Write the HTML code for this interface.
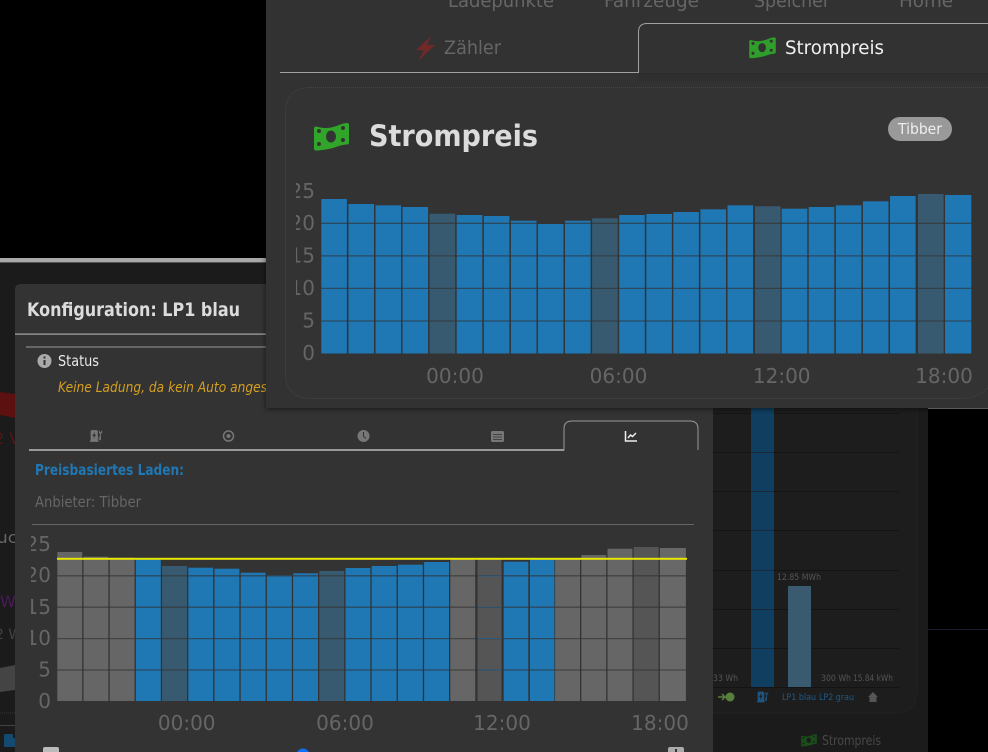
<!DOCTYPE html>
<html lang="de"><head><meta charset="utf-8"><title>Strompreis</title>
<style>
html,body{margin:0;padding:0;background:#000;width:988px;height:752px;overflow:hidden}
svg{display:block}
text{font-family:"DejaVu Sans","Liberation Sans",sans-serif}
.ax{font-size:20px;fill:#666}
</style></head><body>
<svg width="988" height="752" viewBox="0 0 988 752" xmlns="http://www.w3.org/2000/svg">
<defs>
<symbol id="money" viewBox="0 0 35 29">
<path fill-rule="evenodd" d="M2 4C8 5.500 12 6 17 5C23 4 28 .5 33 .5Q35 .5 35 2.500V20Q35 22 33 22C27 22 22 25 17 26C12 27 6 28 2 28Q0 28 0 26V6Q0 4 2 4ZM17 8A5 6 0 1 0 17 20A5 6 0 1 0 17 8ZM5 6.500A2 2 0 1 0 5 10.500A2 2 0 1 0 5 6.500ZM29 3.500A2 2 0 1 0 29 7.500A2 2 0 1 0 29 3.500ZM5 19.500A2 2 0 1 0 5 23.500A2 2 0 1 0 5 19.500ZM29 15.500A2 2 0 1 0 29 19.500A2 2 0 1 0 29 15.500Z"/>
</symbol>
<symbol id="plug" viewBox="0 0 20 20">
<path fill-rule="evenodd" d="M1 3Q1 1 3 1H10Q12 1 12 3V17H13V19H0V17H1ZM7.500 3.500L3.500 10H6L5 15L9.500 8H7Z"/>
<path d="M14 11V15Q14 16 15 16Q16 16 16 15V5M14.500 2V5H18V2M16 5V10" fill="none" stroke="currentColor" stroke-width="1.500"/>
</symbol>
<clipPath id="cTop"><rect x="296" y="170" width="690" height="225"/></clipPath>
<clipPath id="cBot"><rect x="31" y="530" width="680" height="222"/></clipPath>
<filter id="sh" x="-5%" y="-5%" width="110%" height="110%"><feDropShadow dx="0" dy="1" stdDeviation="3" flood-color="#000" flood-opacity=".6"/></filter>
<linearGradient id="tg" x1="0" y1="0" x2="0" y2="1"><stop offset="0" stop-color="#2c2c2c"/><stop offset="1" stop-color="#333"/></linearGradient>
</defs>

<!-- background window -->
<rect width="988" height="752" fill="#000"/>
<rect x="0" y="258" width="988" height="4.500" fill="#a8a8a8"/>
<rect x="0" y="263" width="928" height="489" fill="#1b1b1b"/>
<rect x="928" y="408" width="60" height="1" fill="#888"/>
<rect x="928" y="629" width="60" height="1" fill="#1a1a2a"/>
<path d="M0 392L15 394V418L0 415Z" fill="#5c1010"/>
<text x="-6" y="444" font-size="16" fill="#5c1414">2 V</text>
<text x="-3" y="543" font-size="16" fill="#666" textLength="20" lengthAdjust="spacingAndGlyphs">uc</text>
<text x="0" y="607" font-size="16" fill="#4a1a5a">W</text>
<text x="-5" y="639" font-size="14" fill="#444">2 W</text>
<path d="M0 668L15 665V690L0 692Z" fill="#444"/>
<path d="M0 713H15" stroke="#333" stroke-dasharray="1 1"/>
<rect x="0" y="725" width="15" height="1" fill="#444"/>
<rect x="4" y="734" width="9" height="13" fill="#154a70" rx="1"/>
<rect x="12" y="738" width="3" height="9" fill="#154a70"/>

<!-- background card bottom-right -->
<path d="M700 408H917V690Q917 713 894 713H700Z" fill="#1d1d1d" stroke="#282828" stroke-dasharray="1 1"/>
<g stroke="#141414" stroke-width="1"><path d="M713 413.500H899M713 452.500H899M713 491.500H899M713 530.500H899M713 570.500H899M713 609.500H899M713 648.500H899M713 687.500H899"/></g>
<rect x="751" y="408" width="23" height="279" fill="#0f3e60"/>
<rect x="788" y="586" width="23" height="101" fill="#3a5a70"/>
<g stroke="#1a2a3a" stroke-width="1"><path d="M751 452.500H774M751 491.500H774M751 530.500H774M751 570.500H774M751 609.500H774M751 648.500H774"/></g>
<g font-size="9" fill="#555">
<text x="777" y="580" textLength="44" lengthAdjust="spacingAndGlyphs">12.85 MWh</text>
<text x="713" y="681" textLength="25" lengthAdjust="spacingAndGlyphs">33 Wh</text>
<text x="821" y="681" textLength="30" lengthAdjust="spacingAndGlyphs">300 Wh</text>
<text x="853" y="681" textLength="40" lengthAdjust="spacingAndGlyphs">15.84 kWh</text>
</g>
<path d="M718 697H725M722 694L725 697L722 700" stroke="#56803c" stroke-width="1.500" fill="none"/>
<circle cx="730" cy="697" r="4.500" fill="#56803c"/>
<use href="#plug" x="757" y="691" width="12" height="12" fill="#1f5580" color="#1f5580"/>
<text x="782" y="700" font-size="9" fill="#1f5a85" textLength="34" lengthAdjust="spacingAndGlyphs">LP1 blau</text>
<text x="819" y="700" font-size="9" fill="#1f5a85" textLength="35" lengthAdjust="spacingAndGlyphs">LP2 grau</text>
<path d="M868 697L873 692L878 697H876.500V702H869.500V697Z" fill="#555"/>
<use href="#money" x="801" y="734" width="16" height="13" fill="#1a4d1a"/>
<text x="822" y="745" font-size="13" fill="#484848" textLength="59" lengthAdjust="spacingAndGlyphs">Strompreis</text>

<!-- dialog -->
<path d="M15 752V290Q15 284 21 284H713V752Z" fill="#333"/>
<text x="27" y="316" font-size="19" font-weight="700" fill="#dcdcdc" textLength="213" lengthAdjust="spacingAndGlyphs">Konfiguration: LP1 blau</text>
<rect x="15" y="333.500" width="255" height="1.200" fill="#aaa"/>
<rect x="26" y="346.500" width="245" height="1" fill="#999"/>
<circle cx="44.500" cy="361" r="7" fill="#aaa"/>
<rect x="43.500" y="360" width="2" height="5" fill="#333"/><rect x="43.500" y="356.500" width="2" height="2" fill="#333"/>
<text x="58" y="366" font-size="15" fill="#e8e8e8" textLength="41" lengthAdjust="spacingAndGlyphs">Status</text>
<text x="58" y="392" font-size="14.500" font-style="italic" fill="#d49f1e" textLength="240" lengthAdjust="spacingAndGlyphs">Keine Ladung, da kein Auto angesteckt</text>

<path d="M29 450H564V429Q564 421 572 421H690Q698 421 698 429V450" fill="none" stroke="#999" stroke-width="1"/>
<rect x="29" y="449" width="535" height="2" fill="#999"/>
<use href="#plug" x="90" y="429.500" width="13" height="13" fill="#777" color="#777"/>
<circle cx="228.500" cy="436" r="5" fill="none" stroke="#777" stroke-width="1.500"/><circle cx="228.500" cy="436" r="2" fill="#777"/>
<circle cx="363.500" cy="436" r="6" fill="#777"/><path d="M363.500 432V436.500L366 438.500" stroke="#333" fill="none"/>
<rect x="491" y="431" width="13" height="11" rx="1.500" fill="#777"/><path d="M493 434.500H502M493 437H502M493 439.500H502" stroke="#333" stroke-width=".8"/>
<path d="M625.500 431V441H637" fill="none" stroke="#eee" stroke-width="1.500"/><path d="M628 438L630.500 435L632.500 436.500L636 433" fill="none" stroke="#eee" stroke-width="1.500"/>

<text x="35" y="475" font-size="15" font-weight="700" fill="#1f77b4" textLength="149" lengthAdjust="spacingAndGlyphs">Preisbasiertes Laden:</text>
<text x="35" y="507" font-size="15" fill="#666" textLength="106" lengthAdjust="spacingAndGlyphs">Anbieter: Tibber</text>
<rect x="32" y="524" width="662" height="1" fill="#666"/>

<!-- bottom chart -->
<g fill="#666" >
<rect x="57.300" y="552" width="24.900" height="149"/>
<rect x="83.500" y="556.700" width="24.900" height="144.300"/>
<rect x="109.700" y="557.700" width="24.900" height="143.300"/>
<rect x="450.300" y="558" width="24.900" height="143"/>
<rect x="555.100" y="559" width="24.900" height="142"/>
<rect x="581.300" y="555" width="24.900" height="146"/>
<rect x="607.500" y="548.700" width="24.900" height="152.300"/>
<rect x="659.900" y="548" width="26" height="153" fill="#686868"/>
</g>
<g fill="#555">
<rect x="477.500" y="558.500" width="24" height="142.500"/>
<rect x="633.700" y="547" width="24.900" height="154"/>
</g>
<g fill="#1f77b4">
<rect x="135.900" y="558.300" width="24.900" height="142.700"/>
<rect x="188.300" y="567.700" width="24.900" height="133.300"/>
<rect x="214.500" y="568.700" width="24.900" height="132.300"/>
<rect x="240.700" y="572.700" width="24.900" height="128.300"/>
<rect x="266.900" y="575.300" width="24.900" height="125.700"/>
<rect x="293.100" y="573.300" width="24.900" height="127.700"/>
<rect x="345.500" y="568" width="24.900" height="133"/>
<rect x="371.700" y="566" width="24.900" height="135"/>
<rect x="397.900" y="564.700" width="24.900" height="136.300"/>
<rect x="424.100" y="562" width="24.900" height="139"/>
<rect x="503.700" y="561.700" width="24.600" height="139.300"/>
<rect x="529.900" y="559" width="24.500" height="142"/>
</g>
<g fill="#385a70">
<rect x="162.100" y="566" width="24.900" height="135"/>
<rect x="319.300" y="571" width="24.900" height="130"/>
</g>
<g stroke="#333" stroke-opacity=".65" stroke-width="1.300"><path d="M57 575.800H686M57 607.200H686M57 638.600H686M57 670H686"/></g>
<g stroke="#2a5a80" stroke-width="1"><path d="M478 576H502M478 607H502M478 638.500H502M478 670H502"/></g>
<rect x="57" y="557.800" width="630" height="2" fill="#e6e600"/>
<g class="ax" clip-path="url(#cBot)" text-anchor="end">
<text class="ax" x="51" y="708">0</text>
<text class="ax" x="51" y="676.600">5</text>
<text class="ax" x="51" y="645">10</text>
<text class="ax" x="51" y="614">15</text>
<text class="ax" x="51" y="582">20</text>
<text class="ax" x="51" y="551">25</text>
</g>
<g text-anchor="middle">
<text class="ax" x="186.700" y="730">00:00</text>
<text class="ax" x="345" y="730">06:00</text>
<text class="ax" x="502" y="730">12:00</text>
<text class="ax" x="660" y="730">18:00</text>
</g>
<rect x="43" y="747" width="16" height="12" rx="2" fill="#bbb"/>
<circle cx="303" cy="755" r="6.500" fill="#0d6efd"/>
<rect x="668" y="747" width="16" height="12" rx="2" fill="#aaa"/>
<rect x="675" y="749" width="2" height="4" fill="#333"/>

<!-- top panel -->
<rect x="266" y="-10" width="730" height="418" fill="#333" filter="url(#sh)"/>
<g font-size="19" fill="#666">
<text x="448" y="7" textLength="106" lengthAdjust="spacingAndGlyphs">Ladepunkte</text>
<text x="604" y="7" textLength="95" lengthAdjust="spacingAndGlyphs">Fahrzeuge</text>
<text x="754" y="7" textLength="76" lengthAdjust="spacingAndGlyphs">Speicher</text>
<text x="899" y="7" textLength="54" lengthAdjust="spacingAndGlyphs">Home</text>
</g>
<rect x="639" y="73" width="349" height="12" fill="url(#tg)"/>
<path d="M280 72.500H638.500V32Q638.500 23.500 647 23.500H990" fill="none" stroke="#a0a0a0" stroke-width="1"/>
<path d="M431 36L416 50L423.500 50.500L418 61L435 45H427Z" fill="#702828"/>
<text x="444" y="54" font-size="19" fill="#666" textLength="57" lengthAdjust="spacingAndGlyphs">Zähler</text>
<use href="#money" x="749" y="37" width="27" height="22" fill="#2f9e2a"/>
<text x="785" y="54" font-size="19" fill="#f0f0f0" textLength="99" lengthAdjust="spacingAndGlyphs">Strompreis</text>

<path d="M1010 87.500H311Q285.500 87.500 285.500 113V373Q285.500 398.500 311 398.500H960Q985 398.500 992 380" fill="#333" stroke="#464646" stroke-dasharray="1 1"/>
<use href="#money" x="314" y="122.500" width="35" height="29" fill="#30a52a"/>
<text x="369" y="146" font-size="29" font-weight="700" fill="#dcdcdc" textLength="169" lengthAdjust="spacingAndGlyphs">Strompreis</text>
<rect x="888" y="117" width="64" height="24" rx="12" fill="#999"/>
<text x="920" y="134" font-size="15" fill="#eee" text-anchor="middle" textLength="44" lengthAdjust="spacingAndGlyphs">Tibber</text>

<g fill="#1f77b4">
<rect x="321.300" y="199" width="25.600" height="154.500"/>
<rect x="348.400" y="204" width="25.600" height="149.500"/>
<rect x="375.500" y="205.300" width="25.600" height="148.200"/>
<rect x="402.500" y="207" width="25.600" height="146.500"/>
<rect x="456.700" y="215" width="25.600" height="138.500"/>
<rect x="483.800" y="216" width="25.600" height="137.500"/>
<rect x="510.900" y="220.700" width="25.600" height="132.800"/>
<rect x="537.900" y="224" width="25.600" height="129.500"/>
<rect x="565" y="220.700" width="25.600" height="132.800"/>
<rect x="619.200" y="215" width="25.600" height="138.500"/>
<rect x="646.300" y="214" width="25.600" height="139.500"/>
<rect x="673.300" y="212" width="25.600" height="141.500"/>
<rect x="700.400" y="209.300" width="25.600" height="144.200"/>
<rect x="727.500" y="205.300" width="25.600" height="148.200"/>
<rect x="781.700" y="208.700" width="25.600" height="144.800"/>
<rect x="808.700" y="207" width="25.600" height="146.500"/>
<rect x="835.800" y="205.300" width="25.600" height="148.200"/>
<rect x="862.900" y="201.300" width="25.600" height="152.200"/>
<rect x="890" y="196" width="25.600" height="157.500"/>
<rect x="945" y="195" width="26.300" height="158.500"/>
</g>
<g fill="#385a70">
<rect x="429.600" y="213.700" width="25.600" height="139.800"/>
<rect x="592.100" y="218.300" width="25.600" height="135.200"/>
<rect x="755" y="206.300" width="25.600" height="147.200"/>
<rect x="918" y="194" width="25.600" height="159.500"/>
</g>
<g stroke="#333" stroke-opacity=".65" stroke-width="1.300"><path d="M321 223.300H972M321 255.900H972M321 288.400H972M321 321H972"/></g>
<g clip-path="url(#cTop)" text-anchor="end">
<text class="ax" x="315" y="360">0</text>
<text class="ax" x="315" y="327.500">5</text>
<text class="ax" x="315" y="295">10</text>
<text class="ax" x="315" y="262.500">15</text>
<text class="ax" x="315" y="230">20</text>
<text class="ax" x="315" y="198">25</text>
</g>
<g text-anchor="middle">
<text class="ax" x="455" y="383">00:00</text>
<text class="ax" x="618.500" y="383">06:00</text>
<text class="ax" x="781.700" y="383">12:00</text>
<text class="ax" x="944" y="383">18:00</text>
</g>
</svg>
</body></html>
